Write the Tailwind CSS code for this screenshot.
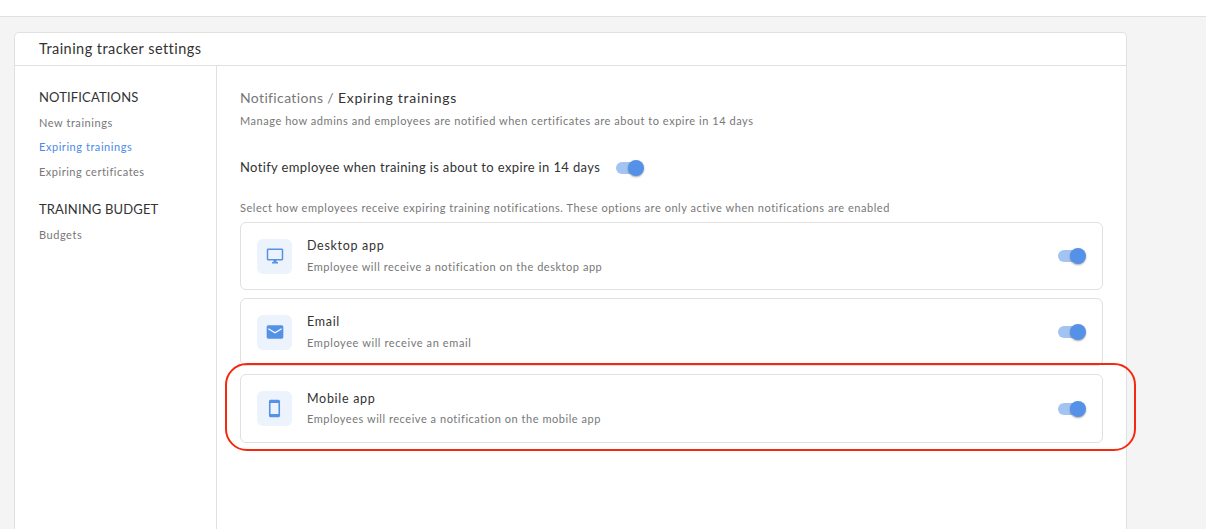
<!DOCTYPE html>
<html lang="en">
<head>
    <meta charset="UTF-8">
    <title>Training tracker settings</title>
    <script src="https://cdn.jsdelivr.net/npm/@tailwindcss/browser@4"></script>
</head>
<body class="bg-[#f4f4f4] font-['Lato',sans-serif] h-[529px] w-[1206px] overflow-hidden relative">

    <!-- Top bar -->
    <div class="h-[17px] bg-white border-b border-[#e0e0e0]"></div>

    <!-- Settings card -->
    <div class="ml-[14px] mt-[15px] w-[1113px] h-[497px] flex flex-col bg-white border border-b-0 border-[#e0e0e0] rounded-t-[5px]">
        <div class="h-[33px] shrink-0 border-b border-[#e0e0e0] pl-[24px] flex items-center text-[14.5px] tracking-[0.45px] text-[#333]">Training tracker settings</div>

        <div class="flex flex-1">
            <!-- Sidebar -->
            <div class="w-[202px] shrink-0 border-r border-[#e0e0e0] pl-[24px] pt-[23px]">
                <div class="text-[13px] leading-[16px] tracking-[0.15px] text-[#333]">NOTIFICATIONS</div>
                <div class="mt-[11px] text-[11px] leading-[14px] tracking-[0.55px] text-[#777]">New trainings</div>
                <div class="mt-[10px] text-[11px] leading-[14px] tracking-[0.55px] text-[#4a8ae8]">Expiring trainings</div>
                <div class="mt-[11px] text-[11px] leading-[14px] tracking-[0.5px] text-[#777]">Expiring certificates</div>
                <div class="mt-[22px] text-[13px] leading-[16px] tracking-[0.15px] text-[#333]">TRAINING BUDGET</div>
                <div class="mt-[11px] text-[11px] leading-[14px] tracking-[0.55px] text-[#777]">Budgets</div>
            </div>

            <!-- Content -->
            <div class="flex-1 pl-[23px] pr-[23px] pt-[23px]">
                <div class="text-[14px] leading-[18px] tracking-[0.36px] text-[#777]">Notifications / <span class="text-[#333] tracking-[0.72px]">Expiring trainings</span></div>
                <div class="mt-[7px] text-[11px] leading-[14px] tracking-[0.54px] text-[#777]">Manage how admins and employees are notified when certificates are about to expire in 14 days</div>

                <div class="mt-[30px] flex items-center h-[20px]">
                    <span class="text-[13px] tracking-[0.36px] text-[#333]">Notify employee when training is about to expire in 14 days</span>
                    <div class="ml-[16px] relative w-[28px] h-[18px]">
                        <div class="absolute left-0 top-[3px] w-[24px] h-[12px] rounded-full bg-[#a3c4f1]"></div>
                        <div class="absolute right-0 top-[1px] w-[16px] h-[16px] rounded-full bg-[#5591e6] shadow-[0_1px_2px_rgba(0,0,0,0.35)]"></div>
                    </div>
                </div>

                <div class="mt-[23px] text-[11px] leading-[14px] tracking-[0.54px] text-[#777]">Select how employees receive expiring training notifications. These options are only active when notifications are enabled</div>

                <!-- Desktop app -->
                <div class="mt-[7px] h-[68px] border border-[#e0e0e0] rounded-[6px] flex items-center pl-[16px] pr-[16px]">
                    <div class="w-[35px] h-[35px] rounded-[6px] bg-[#ecf3fc] flex items-center justify-center">
                        <svg width="18" height="18" viewBox="0 0 24 24" fill="#5591e6"><path d="M21 2H3c-1.100 0-2 .9-2 2v12c0 1.100.9 2 2 2h7v2H8v2h8v-2h-2v-2h7c1.100 0 2-.9 2-2V4c0-1.100-.9-2-2-2zm0 14H3V4h18v12z"/></svg>
                    </div>
                    <div class="ml-[15px] flex-1">
                        <div class="text-[12.5px] leading-[16px] tracking-[0.7px] text-[#333]">Desktop app</div>
                        <div class="mt-[6px] text-[11px] leading-[14px] tracking-[0.54px] text-[#777]">Employee will receive a notification on the desktop app</div>
                    </div>
                    <div class="relative w-[28px] h-[18px]">
                        <div class="absolute left-0 top-[3px] w-[24px] h-[12px] rounded-full bg-[#a3c4f1]"></div>
                        <div class="absolute right-0 top-[1px] w-[16px] h-[16px] rounded-full bg-[#5591e6] shadow-[0_1px_2px_rgba(0,0,0,0.35)]"></div>
                    </div>
                </div>

                <!-- Email -->
                <div class="mt-[8px] h-[68px] border border-[#e0e0e0] rounded-[6px] flex items-center pl-[16px] pr-[16px]">
                    <div class="w-[35px] h-[35px] rounded-[6px] bg-[#ecf3fc] flex items-center justify-center">
                        <svg width="20" height="20" viewBox="0 0 24 24"><rect x="2" y="4" width="20" height="16" rx="2" fill="#5591e6"/><path d="M4 8l8 5 8-5" fill="none" stroke="#ffffff" stroke-width="1.300"/></svg>
                    </div>
                    <div class="ml-[15px] flex-1">
                        <div class="text-[12.5px] leading-[16px] tracking-[0.7px] text-[#333]">Email</div>
                        <div class="mt-[6px] text-[11px] leading-[14px] tracking-[0.6px] text-[#777]">Employee will receive an email</div>
                    </div>
                    <div class="relative w-[28px] h-[18px]">
                        <div class="absolute left-0 top-[3px] w-[24px] h-[12px] rounded-full bg-[#a3c4f1]"></div>
                        <div class="absolute right-0 top-[1px] w-[16px] h-[16px] rounded-full bg-[#5591e6] shadow-[0_1px_2px_rgba(0,0,0,0.35)]"></div>
                    </div>
                </div>

                <!-- Mobile app -->
                <div class="mt-[8px] h-[69px] border border-[#e0e0e0] rounded-[6px] flex items-center pl-[16px] pr-[16px]">
                    <div class="w-[35px] h-[35px] rounded-[6px] bg-[#ecf3fc] flex items-center justify-center">
                        <svg width="19" height="19" viewBox="0 0 24 24" fill="#5591e6"><path d="M17 1H7c-1.100 0-2 .9-2 2v18c0 1.100.9 2 2 2h10c1.100 0 2-.9 2-2V3c0-1.100-.9-2-2-2zm0 18H7V5h10v14z"/></svg>
                    </div>
                    <div class="ml-[15px] flex-1">
                        <div class="text-[12.5px] leading-[16px] tracking-[0.7px] text-[#333]">Mobile app</div>
                        <div class="mt-[5px] text-[11px] leading-[14px] tracking-[0.54px] text-[#777]">Employees will receive a notification on the mobile app</div>
                    </div>
                    <div class="relative w-[28px] h-[18px]">
                        <div class="absolute left-0 top-[3px] w-[24px] h-[12px] rounded-full bg-[#a3c4f1]"></div>
                        <div class="absolute right-0 top-[1px] w-[16px] h-[16px] rounded-full bg-[#5591e6] shadow-[0_1px_2px_rgba(0,0,0,0.35)]"></div>
                    </div>
                </div>
            </div>
        </div>
    </div>

    <!-- Red annotation ring -->
    <div class="absolute left-[225px] top-[363px] w-[911px] h-[88px] border-2 border-[#f5290f] rounded-[22px]"></div>

</body>
</html>
